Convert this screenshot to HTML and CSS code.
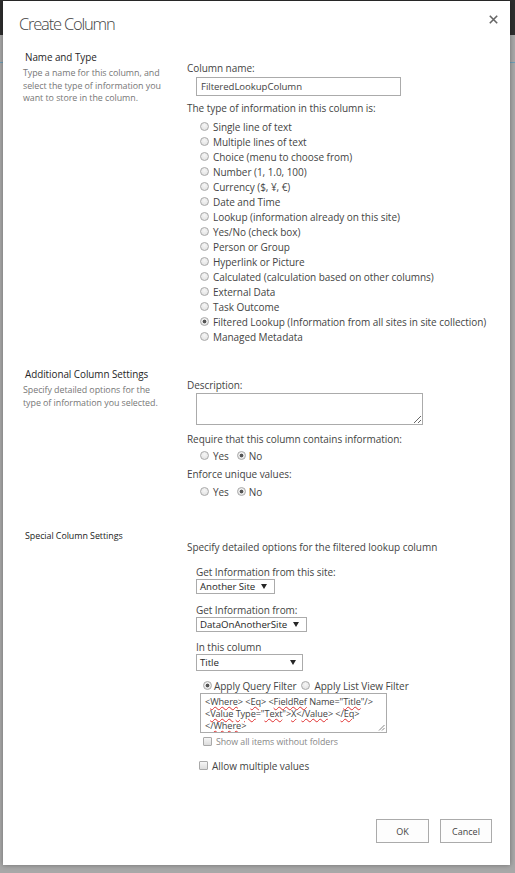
FILE: index.html
```html
<!DOCTYPE html>
<html lang="en">
<head>
<meta charset="utf-8">
<title>Create Column</title>
<link rel="stylesheet" href="styles.css">
</head>
<body>
<div class="dialog">
  <div class="titlebar">
    <h1 class="title">Create Column</h1>
    <span class="close"><svg width="9" height="9" viewBox="0 0 9 9"><path d="M0.8 0.8L8.2 8.2M8.2 0.8L0.8 8.2" stroke="#666" stroke-width="1.6"/></svg></span>
  </div>

  <section class="section s1">
    <div class="sec-left">
      <h2 class="sec-head">Name and Type</h2>
      <p class="sec-desc d1">Type a name for this column, and<br>select the type of information you<br>want to store in the column.</p>
    </div>
    <div class="sec-right r1">
      <div class="label">Column name:</div>
      <div class="textbox">FilteredLookupColumn</div>
      <div class="label l-type">The type of information in this column is:</div>
      <div class="radio-list">
        <div class="opt"><span class="radio"></span>Single line of text</div>
        <div class="opt"><span class="radio"></span>Multiple lines of text</div>
        <div class="opt"><span class="radio"></span>Choice (menu to choose from)</div>
        <div class="opt"><span class="radio"></span>Number (1, 1.0, 100)</div>
        <div class="opt"><span class="radio"></span>Currency ($, ¥, €)</div>
        <div class="opt"><span class="radio"></span>Date and Time</div>
        <div class="opt"><span class="radio"></span>Lookup (information already on this site)</div>
        <div class="opt"><span class="radio"></span>Yes/No (check box)</div>
        <div class="opt"><span class="radio"></span>Person or Group</div>
        <div class="opt"><span class="radio"></span>Hyperlink or Picture</div>
        <div class="opt"><span class="radio"></span>Calculated (calculation based on other columns)</div>
        <div class="opt"><span class="radio"></span>External Data</div>
        <div class="opt"><span class="radio"></span>Task Outcome</div>
        <div class="opt"><span class="radio checked"></span>Filtered Lookup (Information from all sites in site collection)</div>
        <div class="opt"><span class="radio"></span>Managed Metadata</div>
      </div>
    </div>
  </section>

  <section class="section s2">
    <div class="sec-left">
      <h2 class="sec-head">Additional Column Settings</h2>
      <p class="sec-desc d2">Specify detailed options for the<br>type of information you selected.</p>
    </div>
    <div class="sec-right r2">
      <div class="label">Description:</div>
      <textarea class="desc-area" aria-label="Description"></textarea>
      <div class="label l-req">Require that this column contains information:</div>
      <div class="yesno"><span class="radio"></span>Yes<span class="radio checked no"></span>No</div>
      <div class="label l-enf">Enforce unique values:</div>
      <div class="yesno"><span class="radio"></span>Yes<span class="radio checked no"></span>No</div>
    </div>
  </section>

  <section class="section s3">
    <div class="sec-left">
      <h2 class="sec-head small">Special Column Settings</h2>
    </div>
    <div class="sec-right r3">
      <div class="label">Specify detailed options for the filtered lookup column</div>
      <div class="inner">
        <div class="sublabel first">Get Information from this site:</div>
        <div class="select">Another Site<span class="arrow"><svg width="6" height="5" viewBox="0 0 6 5"><path d="M0 0H6L3 5Z" fill="#262626"/></svg></span></div>
        <div class="sublabel">Get Information from:</div>
        <div class="select">DataOnAnotherSite<span class="arrow"><svg width="6" height="5" viewBox="0 0 6 5"><path d="M0 0H6L3 5Z" fill="#262626"/></svg></span></div>
        <div class="sublabel l-col">In this column</div>
        <div class="select wide">Title<span class="arrow"><svg width="6" height="5" viewBox="0 0 6 5"><path d="M0 0H6L3 5Z" fill="#262626"/></svg></span></div>
        <div class="filter-row"><span class="radio checked"></span>Apply Query Filter<span class="radio r-list"></span>Apply List View Filter</div>
        <div class="query">
          <div class="query-text">&lt;<span class="sp">Where</span>&gt; &lt;<span class="sp">Eq</span>&gt; &lt;<span class="sp">FieldRef</span> Name="<span class="sp">Title</span>"/&gt;<br>&lt;<span class="sp">Value</span> <span class="sp">Type</span>="<span class="sp">Text</span>"&gt;<span class="sp">X</span>&lt;<span class="sp">/Value</span>&gt; &lt;<span class="sp">/Eq</span>&gt;<br>&lt;<span class="sp">/Where</span>&gt;</div>
          <svg class="grip" width="7" height="7" viewBox="0 0 7 7"><path d="M6.5 1L1 6.5M6.5 4L4 6.5" stroke="#777" stroke-width="0.9"/></svg>
        </div>
        <div class="check-row folders"><span class="checkbox"></span>Show all items without folders</div>
        <div class="check-row multi"><span class="checkbox"></span>Allow multiple values</div>
      </div>
    </div>
  </section>

  <div class="footer">
    <button class="btn ok">OK</button>
    <button class="btn cancel">Cancel</button>
  </div>
</div>
</body>
</html>
```

FILE: styles.css
```css
html, body {
  margin: 0;
  padding: 0;
}
body {
  width: 515px;
  height: 873px;
  overflow: hidden;
  background:
    linear-gradient(#2e2e2e, #2e2e2e) 0 0 / 100% 35px no-repeat,
    linear-gradient(#6f9fb8, #6f9fb8) 0 62px / 100% 1px no-repeat,
    #a8a8a8;
  font-family: "Open Sans", "Noto Sans", sans-serif;
  font-size: 10px;
  letter-spacing: -0.05px;
  color: #444;
}
.dialog {
  margin: 1px 0 0 3px;
  width: 507px;
  height: 864px;
  background: #fff;
  box-shadow: 0 0 5px rgba(0, 0, 0, 0.35);
  display: flex;
  flex-direction: column;
  box-sizing: border-box;
}
.titlebar {
  display: flex;
  justify-content: space-between;
  align-items: flex-start;
  padding: 10px 12px 0 16px;
  height: 49px;
  box-sizing: border-box;
}
.title {
  margin: 0;
  font-weight: 300;
  font-size: 16.5px;
  letter-spacing: -1.2px;
  line-height: 25px;
  color: #444;
}
.close {
  display: block;
  width: 9px;
  height: 9px;
  margin-top: 4px;
}
.close svg { display: block; }

.section {
  display: flex;
}
.sec-left {
  width: 184px;
  padding-left: 20px;
  box-sizing: border-box;
  flex: none;
}
.sec-right {
  flex: 1;
}
.sec-head {
  margin: 0;
  padding-left: 2px;
  font-weight: 400;
  font-size: 9.9px;
  line-height: 15px;
  color: #262626;
}
.sec-head.small {
  font-size: 8.9px;
  color: #222;
}
.sec-desc {
  margin: 0;
  color: #777;
  font-size: 8.9px;
}
.d1 { margin-top: 2px; line-height: 12.5px; }
.d2 { margin-top: 1px; line-height: 13px; }

.s2 { margin-top: 23px; }
.s3 { margin-top: 29px; }

.r1 { padding-top: 11px; }
.r2 { padding-top: 11px; }
.r3 { padding-top: 12px; }

.label {
  line-height: 15px;
  color: #444;
}
.textbox {
  margin: 1px 0 0 9px;
  width: 205px;
  height: 19px;
  border: 1px solid #ababab;
  box-sizing: border-box;
  padding-left: 4px;
  line-height: 17px;
  font-size: 9.6px;
  color: #444;
}
.l-type { margin-top: 5px; }
.radio-list { margin-top: 3px; }
.opt {
  display: flex;
  align-items: center;
  height: 15px;
  padding-left: 13px;
  gap: 4px;
}
.radio {
  display: inline-block;
  flex: none;
  width: 9px;
  height: 9px;
  border-radius: 50%;
  border: 1px solid #a9a9a9;
  box-sizing: border-box;
  background: radial-gradient(circle at 50% 35%, #f6f6f6 0, #dedede 100%);
}
.radio.checked {
  background:
    radial-gradient(circle, #555 0 1.6px, transparent 2.2px),
    radial-gradient(circle at 50% 35%, #f6f6f6 0, #dedede 100%);
}

.desc-area {
  display: block;
  margin: 0 0 0 9px;
  width: 227px;
  height: 32px;
  border: 1px solid #ababab;
  box-sizing: border-box;
  padding: 0;
  resize: both;
  outline: none;
  font: inherit;
}
.l-req { margin-top: 7px; }
.l-enf { margin-top: 4px; }
.yesno {
  display: flex;
  align-items: center;
  height: 15px;
  padding-left: 13px;
  margin-top: 1px;
}
.yesno .radio { margin-right: 4px; }
.yesno .radio.no { margin-left: 8px; margin-right: 3px; }
.l-enf + .yesno { margin-top: 2px; }

.inner {
  padding-left: 9px;
}
.sublabel {
  line-height: 12px;
  margin-top: 10px;
}
.sublabel.first { margin-top: 11px; }
.sublabel.l-col { margin-top: 9px; }
.select {
  display: flex;
  align-items: center;
  width: max-content;
  height: 15px;
  margin-top: 1px;
  border: 1px solid #ababab;
  box-sizing: border-box;
  padding: 0 7px 0 3px;
  gap: 6px;
  color: #262626;
  font-size: 9.7px;
}
.select.wide {
  width: 107px;
  height: 17px;
  justify-content: space-between;
  padding-right: 6px;
}
.arrow { display: flex; }
.arrow svg { display: block; }

.filter-row {
  display: flex;
  align-items: center;
  height: 15px;
  margin-top: 7px;
  padding-left: 7px;
}
.filter-row .radio { margin-right: 2px; }
.filter-row .r-list { margin-left: 4px; margin-right: 5px; }

.query {
  position: relative;
  margin-left: 4px;
  width: 187px;
  height: 40px;
  border: 1px solid #ababab;
  box-sizing: border-box;
  padding: 2px 0 0 4px;
  overflow: hidden;
}
.query-text {
  font-size: 9.2px;
  line-height: 12px;
  letter-spacing: -0.1px;
  color: #444;
}
.sp {
  text-decoration: underline wavy #e03030;
  text-decoration-thickness: 0.6px;
  text-underline-offset: 1px;
}
.grip {
  position: absolute;
  right: 1px;
  bottom: 1px;
}

.check-row {
  display: flex;
  align-items: center;
  height: 15px;
}
.checkbox {
  flex: none;
  width: 9px;
  height: 9px;
  border: 1px solid #a9a9a9;
  border-radius: 1px;
  box-sizing: border-box;
  background: linear-gradient(#f6f6f6, #dcdcdc);
}
.folders {
  margin-top: 1px;
  padding-left: 7px;
  color: #888;
  font-size: 8.8px;
}
.folders .checkbox { margin-right: 4px; }
.multi {
  margin-top: 9px;
  padding-left: 3px;
}
.multi .checkbox { margin-right: 4px; }

.footer {
  margin-top: auto;
  display: flex;
  justify-content: flex-end;
  gap: 11px;
  padding: 0 18px 22px 0;
}
.btn {
  height: 24px;
  border: 1px solid #ababab;
  background: #fdfdfd;
  font-family: inherit;
  font-size: 9px;
  color: #444;
  padding: 0;
  margin: 0;
}
.ok { width: 53px; }
.cancel { width: 52px; }
```
